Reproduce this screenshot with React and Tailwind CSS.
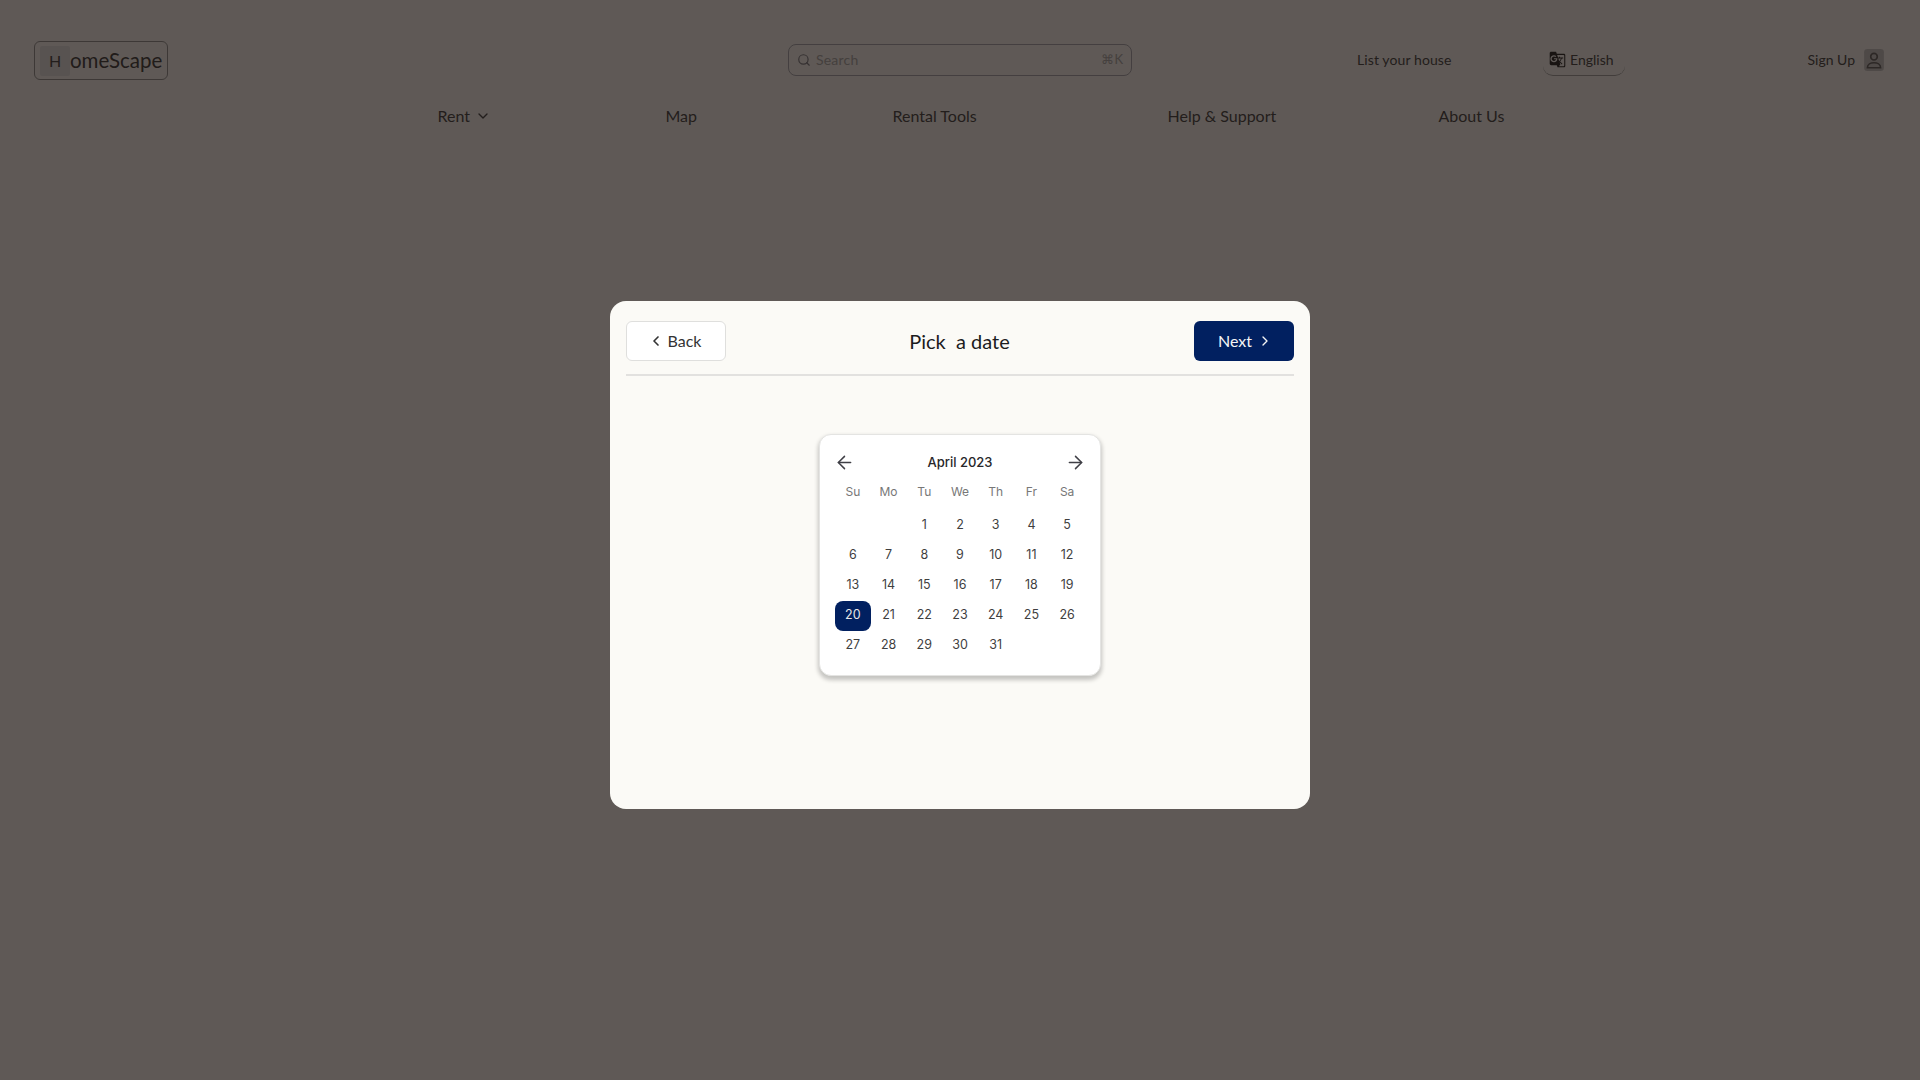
import React from "react";
import { ChevronLeft, ChevronRight, ChevronDown, ArrowLeft, ArrowRight, Search } from "lucide-react";
import { MdGTranslate } from "react-icons/md";

const weeks = [
  ["", "", 1, 2, 3, 4, 5],
  [6, 7, 8, 9, 10, 11, 12],
  [13, 14, 15, 16, 17, 18, 19],
  [20, 21, 22, 23, 24, 25, 26],
  [27, 28, 29, 30, 31, "", ""],
];
const days = ["Su", "Mo", "Tu", "We", "Th", "Fr", "Sa"];

function Calendar() {
  return (
    <div className="w-[282px] h-[242px] rounded-[12px] bg-white border border-[#e4e4e2] shadow-[0_3px_4px_1px_rgba(0,0,0,0.22)] px-[15px] pt-[15px] font-['Inter',sans-serif]">
      <div className="flex items-center justify-between h-[24px] w-[252px] ml-[-1px]">
        <ArrowLeft className="w-[21px] h-[21px] text-[#3f3f46]" strokeWidth={1.7} />
        <span className="text-[13px] font-medium text-[#27272a] leading-[24px]">April 2023</span>
        <ArrowRight className="w-[21px] h-[21px] text-[#3f3f46]" strokeWidth={1.7} />
      </div>
      <div className="grid grid-cols-7 w-[250px] h-[34px] items-center mt-[1px]">
        {days.map((d) => (
          <span key={d} className="text-center text-[12px] text-[#777777]">{d}</span>
        ))}
      </div>
      <div className="grid grid-cols-7 w-[250px] mt-[1.5px]">
        {weeks.flat().map((d, i) =>
          d === 20 ? (
            <span key={i} className="h-[30px] rounded-[8px] bg-[#012060] text-[#e8e8e8] text-[12.5px] flex items-center justify-center">{d}</span>
          ) : (
            <span key={i} className="h-[30px] text-[#3f3f3f] text-[12.5px] flex items-center justify-center">{d}</span>
          )
        )}
      </div>
    </div>
  );
}

export default function App() {
  return (
    <div className="relative w-full h-screen overflow-hidden bg-[#faf9f5] font-['Lato',sans-serif] text-[#27272a]">
      <header>
        <div className="h-[80px] pt-[40px] flex items-center pl-[34px] pr-[36px]">
          <div className="w-[134px] h-[39px] shrink-0 border border-[#8a8a8a] rounded-[6px] flex items-center pl-[5px] mt-[1px]">
            <span className="w-[30px] h-[30px] rounded-[2px] bg-[#e4e4e4] flex items-center justify-center text-[16px] text-[#333]">H</span>
            <span className="text-[20.5px] leading-none mb-[1px] text-[#2c2c2c]">omeScape</span>
          </div>
          <div className="ml-[620px] w-[344px] h-[32px] shrink-0 border border-[#a1a1aa] rounded-[8px] flex items-center px-[8px] text-[#a3a3a3]">
            <Search className="w-[14px] h-[14px] text-[#71717a]" strokeWidth={2} />
            <span className="text-[14px] ml-[5px] tracking-[0.2px] mb-[1px]">Search</span>
            <span className="text-[13px] ml-auto">⌘K</span>
          </div>
          <div className="ml-[225px] w-[100px] shrink-0 text-[14px] tracking-[0.1px] leading-[20px] text-[#333]">List your house</div>
          <div className="ml-[86px] w-[82px] h-[32px] shrink-0 border-b border-[#9a9a9a] rounded-[10px] flex items-center pl-[6px] gap-[4px] text-[14px] text-[#333]">
            <MdGTranslate className="w-[17px] h-[17px] text-[#111]" />
            <span>English</span>
          </div>
          <div className="ml-auto flex items-center gap-[9px] text-[14px] text-[#333]">
            <span className="mb-[1px]">Sign Up</span>
            <svg width="20" height="22" viewBox="0 0 18 20">
              <rect width="18" height="20" rx="3" fill="#c4c4c4" />
              <circle cx="9" cy="7" r="3" fill="none" stroke="#555" strokeWidth="1.500" />
              <path d="M3 17c0-3 3-4.500 6-4.500s6 1.500 6 4.500z" fill="none" stroke="#555" strokeWidth="1.500" />
            </svg>
          </div>
        </div>
        <nav className="grid grid-cols-[228px_227px_275px_271px_auto] pl-[437.5px] mt-[24px] h-[24px] items-center text-[16px] text-[#333]">
          <span className="flex items-center gap-[5px]">Rent <ChevronDown className="w-[16px] h-[16px]" /></span>
          <span>Map</span>
          <span>Rental Tools</span>
          <span>Help &amp; Support</span>
          <span>About Us</span>
        </nav>
      </header>

      <div className="fixed inset-0 bg-[rgba(29,22,18,0.7)] flex items-center justify-center pt-[30px]">
        <div className="w-[700px] h-[508px] bg-[#fbfaf6] rounded-[16px] px-[16px] pt-[20px]">
          <div className="flex items-center justify-between h-[40px]">
            <button className="w-[100px] h-[40px] bg-white border border-[#dfdfdd] rounded-[6px] flex items-center justify-center gap-[4px] pr-[3px] text-[16px] text-[#333]">
              <ChevronLeft className="w-[16px] h-[16px]" strokeWidth={2.5} />
              Back
            </button>
            <h2 className="text-[20px] font-normal text-[#1c1c1e] whitespace-pre mb-[1px] mr-[1px]">Pick  a date</h2>
            <button className="w-[100px] h-[40px] bg-[#012060] rounded-[6px] flex items-center justify-center gap-[5px] pl-[3px] text-[16px] text-[#f5f5f5]">
              Next
              <ChevronRight className="w-[16px] h-[16px]" strokeWidth={2} />
            </button>
          </div>
          <div className="h-[2px] bg-[#e2e1df] mt-[13px]" />
          <div className="flex justify-center mt-[58px]">
            <Calendar />
          </div>
        </div>
      </div>
    </div>
  );
}
